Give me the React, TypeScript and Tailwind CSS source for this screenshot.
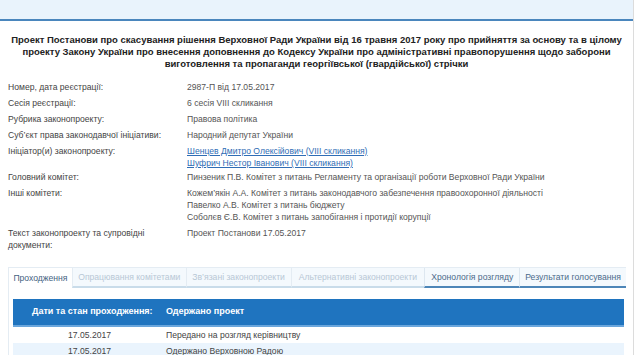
import React from 'react';

const FONT = { fontFamily: '"Liberation Sans", Arial, sans-serif' };

type Row = { label: string[]; values: React.ReactNode[]; tight?: boolean };

const ROWS: Row[] = [
  { label: ['Номер, дата реєстрації:'], values: ['2987-П від 17.05.2017'] },
  { label: ['Сесія реєстрації:'], values: ['6 сесія VIII скликання'] },
  { label: ['Рубрика законопроекту:'], values: ['Правова політика'] },
  { label: ['Суб\u2019єкт права законодавчої ініціативи:'], values: ['Народний депутат України'] },
  {
    label: ['Ініціатор(и) законопроекту:'],
    values: [
      <a key="1" className="text-[#2f6db5] underline">Шенцев Дмитро Олексійович (VIII скликання)</a>,
      <a key="2" className="text-[#2f6db5] underline">Шуфрич Нестор Іванович (VIII скликання)</a>,
    ],
    tight: true,
  },
  { label: ['Головний комітет:'], values: ['Пинзеник П.В. Комітет з питань Регламенту та організації роботи Верховної Ради України'] },
  {
    label: ['Інші комітети:'],
    values: [
      'Кожем\u2019якін А.А. Комітет з питань законодавчого забезпечення правоохоронної діяльності',
      'Павелко А.В. Комітет з питань бюджету',
      'Соболєв Є.В. Комітет з питань запобігання і протидії корупції',
    ],
  },
  { label: ['Текст законопроекту та супровідні', 'документи:'], values: ['Проект Постанови 17.05.2017'] },
];

const TABS = [
  { name: 'Проходження', w: 63, kind: 'active' },
  { name: 'Опрацювання комітетами', w: 114, kind: 'dim' },
  { name: 'Зв\u2019язані законопроекти', w: 105, kind: 'dim' },
  { name: 'Альтернативні законопроекти', w: 134, kind: 'dim' },
  { name: 'Хронологія розгляду', w: 95, kind: 'strong' },
  { name: 'Результати голосування', w: 107, kind: 'strong' },
];

export default function App() {
  return (
    <div className="w-[639px] h-[355px] overflow-hidden bg-white" style={FONT}>
      <div className="w-[634px] h-full border-r border-[#dcdcdc]">
        <div className="h-[21px] bg-[#e9f3fc] border-b-2 border-[#4a86bd]" />

        <h1 className="mt-[13px] text-center text-[9.5px] font-bold leading-[12px] text-[#222] whitespace-nowrap">
          <div>Проект Постанови про скасування рішення Верховної Ради України від 16 травня 2017 року про прийняття за основу та в цілому</div>
          <div>проекту Закону України про внесення доповнення до Кодексу України про адміністративні правопорушення щодо заборони</div>
          <div>виготовлення та пропаганди георгіївської (гвардійської) стрічки</div>
        </h1>

        <div className="mt-[11px] flex flex-col gap-[4px] text-[8.6px] leading-[12px]">
          {ROWS.map((r, i) => (
            <div key={i} className={r.tight ? 'flex -mb-[2px]' : 'flex'}>
              <div className="w-[187px] pl-[8px] text-[#444]">
                {r.label.map((l, j) => (
                  <div key={j}>{l}</div>
                ))}
              </div>
              <div className="flex-1 text-[#555]">
                {r.values.map((v, j) => (
                  <div key={j}>{v}</div>
                ))}
              </div>
            </div>
          ))}
        </div>

        <div className="mt-[16px] ml-[8px] w-[618px] border-l border-t border-[#e4ecf3] pb-2">
          <div className="flex h-[20px] text-[8.6px]">
            {TABS.map((t) => (
              <div
                key={t.name}
                style={{ width: t.w }}
                className={
                  t.kind === 'active'
                    ? 'flex items-center justify-center bg-white text-[#44627f]'
                    : t.kind === 'dim'
                    ? 'flex items-center justify-center bg-[#f4f9fd] text-[#b8c8d6] border-b-2 border-[#c9dcea] border-l border-l-[#e4ecf3]'
                    : 'flex items-center justify-center bg-[#f4f9fd] text-[#4b6a8a] border-b-2 border-[#4d86b8] border-l border-l-[#dde7f0]'
                }
              >
                {t.name}
              </div>
            ))}
          </div>

          <div className="mt-[11px] ml-[4px] w-[611px] text-[8.6px]">
            <div className="flex h-[28px] items-center bg-[#1f74bf] border-b-2 border-[#6aa6dc] font-bold text-white text-[9px]">
              <div className="w-[153px] pl-[19px]">Дати та стан проходження:</div>
              <div>Одержано проект</div>
            </div>
            <div className="flex h-[16px] items-center bg-white text-[#444]">
              <div className="w-[153px] text-center">17.05.2017</div>
              <div>Передано на розгляд керівництву</div>
            </div>
            <div className="flex h-[16px] items-center bg-[#eaf4fd] text-[#444]">
              <div className="w-[153px] text-center">17.05.2017</div>
              <div>Одержано Верховною Радою</div>
            </div>
          </div>
        </div>
      </div>
    </div>
  );
}
